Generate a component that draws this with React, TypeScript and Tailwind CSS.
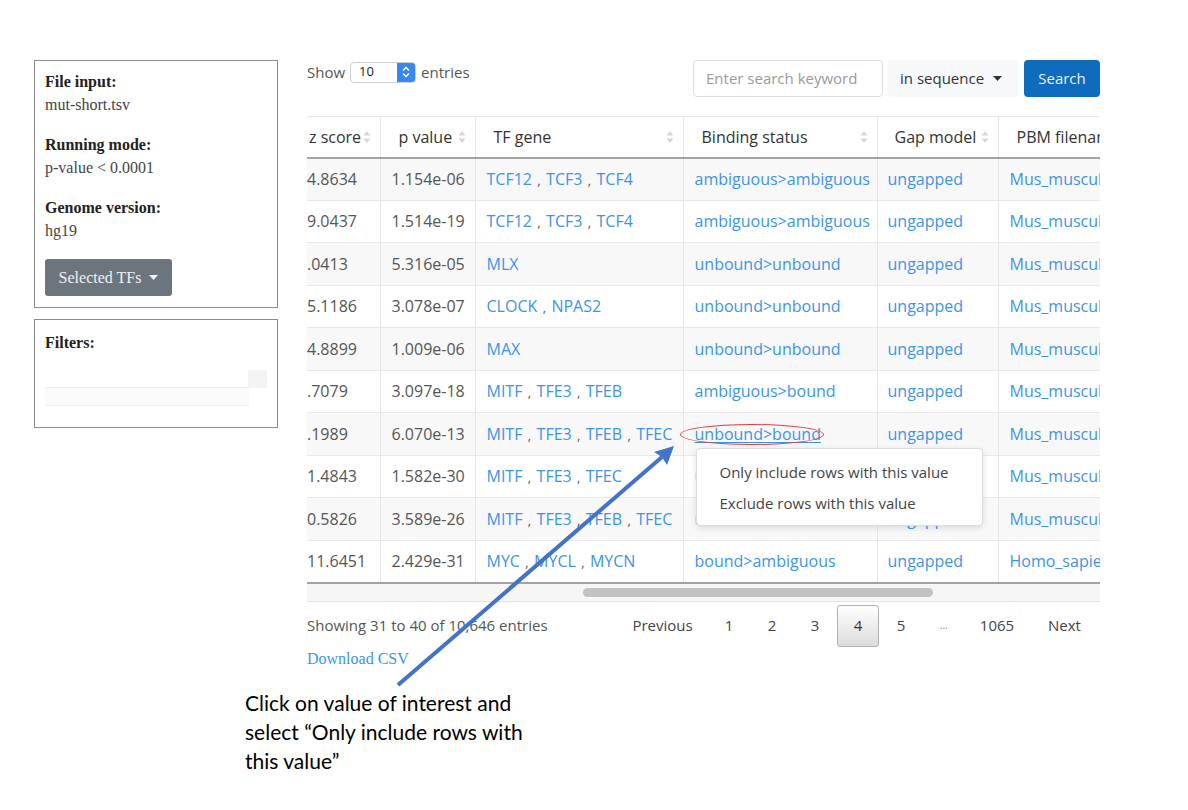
import { ReactNode } from "react";

type Row = {
    z: string;
    p: string;
    tf: string[];
    binding: string;
    gap: string;
    file: string;
    menu?: boolean;
};

const rows: Row[] = [
    { z: "4.8634", p: "1.154e-06", tf: ["TCF12", "TCF3", "TCF4"], binding: "ambiguous>ambiguous", gap: "ungapped", file: "Mus_musculus" },
    { z: "9.0437", p: "1.514e-19", tf: ["TCF12", "TCF3", "TCF4"], binding: "ambiguous>ambiguous", gap: "ungapped", file: "Mus_musculus" },
    { z: ".0413", p: "5.316e-05", tf: ["MLX"], binding: "unbound>unbound", gap: "ungapped", file: "Mus_musculus" },
    { z: "5.1186", p: "3.078e-07", tf: ["CLOCK", "NPAS2"], binding: "unbound>unbound", gap: "ungapped", file: "Mus_musculus" },
    { z: "4.8899", p: "1.009e-06", tf: ["MAX"], binding: "unbound>unbound", gap: "ungapped", file: "Mus_musculus" },
    { z: ".7079", p: "3.097e-18", tf: ["MITF", "TFE3", "TFEB"], binding: "ambiguous>bound", gap: "ungapped", file: "Mus_musculus" },
    { z: ".1989", p: "6.070e-13", tf: ["MITF", "TFE3", "TFEB", "TFEC"], binding: "unbound>bound", gap: "ungapped", file: "Mus_musculus", menu: true },
    { z: "1.4843", p: "1.582e-30", tf: ["MITF", "TFE3", "TFEC"], binding: "unbound>bound", gap: "ungapped", file: "Mus_musculus" },
    { z: "0.5826", p: "3.589e-26", tf: ["MITF", "TFE3", "TFEB", "TFEC"], binding: "unbound>bound", gap: "ungapped", file: "Mus_musculus" },
    { z: "11.6451", p: "2.429e-31", tf: ["MYC", "MYCL", "MYCN"], binding: "bound>ambiguous", gap: "ungapped", file: "Homo_sapiens" },
];

const SortIcon = () => (
    <svg width="8" height="14" viewBox="0 0 8 14" className="shrink-0">
        <path d="M4 1 L7.5 5.5 H0.5 Z" fill="#d6d6d6" />
        <path d="M4 13 L7.5 8.5 H0.5 Z" fill="#d6d6d6" />
    </svg>
);

const Info = ({ label, value }: { label: string; value: string }) => (
    <div className="mb-[17px]">
        <div className="font-bold text-[#222] leading-[23px]">{label}</div>
        <div className="text-[#444] leading-[23px]">{value}</div>
    </div>
);

const Sidebar = () => (
    <aside className="w-[244px] flex flex-col gap-[11px] font-['Liberation_Serif',serif] text-[16px]">
        <div className="border border-[#8c8c8c] h-[248px] px-[10px] pt-[9px]">
            <Info label="File input:" value="mut-short.tsv" />
            <Info label="Running mode:" value="p-value < 0.0001" />
            <Info label="Genome version:" value="hg19" />
            <button className="mt-[1px] h-[37px] w-[127px] rounded-[3px] bg-[#6c757d] text-[#eef0f2] flex items-center justify-center gap-[8px] text-[16px]">
                Selected TFs
                <svg width="9" height="5" viewBox="0 0 9 5"><path d="M0 0 H9 L4.5 5 Z" fill="#f3f3f3" /></svg>
            </button>
        </div>
        <div className="border border-[#8c8c8c] h-[109px] px-[10px] pt-[11px]">
            <div className="font-bold text-[#222] leading-[23px]">Filters:</div>
            <div className="mt-[16px] flex">
                <div className="w-[204px] h-[18px] border-b border-[#ececec]" />
                <div className="w-[19px] h-[18px] bg-[#f4f4f4]" />
            </div>
            <div className="w-[204px] h-[18px] bg-[#fafafa] border-b border-[#efefef]" />
        </div>
    </aside>
);

const Controls = () => (
    <div className="flex items-start justify-between h-[37px] text-[15px] text-[#555]">
        <div className="flex items-center gap-[5px] mt-[2px] h-[20px]">
            <span>Show</span>
            <div className="flex items-center w-[66px] h-[21px] border border-[#cfcfcf] rounded-[4px] overflow-hidden bg-white">
                <span className="flex-1 pl-[8px] text-[13px] text-[#222]">10</span>
                <span className="w-[18px] h-full bg-[#3a87f1] flex flex-col items-center justify-center">
                    <svg width="8" height="12" viewBox="0 0 8 12"><path d="M1 4.5 L4 1.5 L7 4.5 M1 7.5 L4 10.5 L7 7.5" stroke="white" strokeWidth="1.5" fill="none" /></svg>
                </span>
            </div>
            <span>entries</span>
        </div>
        <div className="flex items-center gap-[5px]">
            <div className="w-[190px] h-[37px] border border-[#dedede] rounded-[4px] flex items-center pl-[12px] text-[#9a9a9a]">
                Enter search keyword
            </div>
            <div className="w-[131px] h-[37px] rounded-[4px] bg-[#f7f8f9] flex items-center pl-[12px] gap-[9px] text-[#333]">
                in sequence
                <svg width="9" height="5" viewBox="0 0 9 5"><path d="M0 0 H9 L4.5 5 Z" fill="#333" /></svg>
            </div>
            <button className="w-[76px] h-[37px] rounded-[4px] bg-[#0e6bbd] text-[#e8f1fb]">Search</button>
        </div>
    </div>
);

const headers: { label: string; w: string; pl: string }[] = [
    { label: "z score", w: "w-[73px]", pl: "pl-[2px]" },
    { label: "p value", w: "w-[95px]", pl: "pl-[18px]" },
    { label: "TF gene", w: "w-[208px]", pl: "pl-[18px]" },
    { label: "Binding status", w: "w-[194px]", pl: "pl-[18px]" },
    { label: "Gap model", w: "w-[121px]", pl: "pl-[17px]" },
    { label: "PBM filename", w: "w-[160px]", pl: "pl-[18px]" },
];

const Link = ({ children, underline }: { children: ReactNode; underline?: boolean }) => (
    <span className={underline ? "text-[#3d93ec] underline underline-offset-2" : "text-[#3d93ec]"}>{children}</span>
);

const Table = () => (
    <div className="mt-[19px] w-[793px] overflow-hidden">
        <table className="table-fixed border-collapse w-[851px] text-[16px] text-[#555]">
            <thead>
                <tr className="h-[41px] border-t border-[#e6e8eb] border-b-2 border-b-[#a3a3a3]">
                    {headers.map((h, i) => (
                        <th key={h.label} className={`${h.w} ${h.pl} pr-[9px] font-normal text-[#333] text-left ${i < 5 ? "border-r border-[#e3e6ea]" : ""}`}>
                            <div className="flex items-center justify-between whitespace-nowrap">
                                <span>{h.label}</span>
                                {i < 5 && <SortIcon />}
                            </div>
                        </th>
                    ))}
                </tr>
            </thead>
            <tbody>
                {rows.map((r, i) => (
                    <tr key={i} className={`h-[42.5px] border-b border-[#e8e8e8] ${i === rows.length - 1 ? "border-b-2 border-b-[#a3a3a3]" : ""} ${i % 2 === 0 ? "bg-[#f8f8f8]" : "bg-white"}`}>
                        <td className="pl-0 pr-[8px] border-r border-[#e3e6ea] whitespace-nowrap">{r.z}</td>
                        <td className="px-[11px] border-r border-[#e3e6ea] whitespace-nowrap">{r.p}</td>
                        <td className="px-[11px] border-r border-[#e3e6ea] whitespace-nowrap">
                            {r.tf.map((g, j) => (
                                <span key={g}>
                                    {j > 0 && <span className="text-[#555] text-[13px] px-[2px]"> , </span>}
                                    <Link>{g}</Link>
                                </span>
                            ))}
                        </td>
                        <td className="relative px-[11px] border-r border-[#e3e6ea] whitespace-nowrap">
                            <Link underline={r.menu}>{r.binding}</Link>
                            {r.menu && (
                                <>
                                    <div className="absolute left-[-4px] top-[11px] w-[144px] h-[21px] border border-[#e0413a] rounded-[50%]" />
                                    <div className="absolute z-10 left-[12px] top-[35px] w-[287px] h-[78px] bg-white border border-[#dcdcdc] rounded-[4px] shadow-[0_2px_6px_rgba(0,0,0,0.12)] pt-[8px] pl-[23px] text-[15px] text-[#444]">
                                        <div className="h-[31px] flex items-center">Only include rows with this value</div>
                                        <div className="h-[31px] flex items-center">Exclude rows with this value</div>
                                    </div>
                                </>
                            )}
                        </td>
                        <td className="px-[10px] border-r border-[#e3e6ea] whitespace-nowrap"><Link>{r.gap}</Link></td>
                        <td className="px-[11px] whitespace-nowrap overflow-hidden"><Link>{r.file}</Link></td>
                    </tr>
                ))}
            </tbody>
        </table>
        <div className="h-[18px] bg-[#f6f6f6] border-b border-[#e4e4e4] flex items-center">
            <div className="ml-[276px] w-[350px] h-[9px] rounded-full bg-[#c2c2c2]" />
        </div>
    </div>
);

const pages = [
    { label: "Previous", w: "w-[89px]" },
    { label: "1", w: "w-[42px]" },
    { label: "2", w: "w-[42px]" },
    { label: "3", w: "w-[42px]" },
    { label: "4", w: "w-[42px]", active: true },
    { label: "5", w: "w-[42px]" },
    { label: "…", w: "w-[42px]", small: true },
    { label: "1065", w: "w-[62px]" },
    { label: "Next", w: "w-[71px]" },
];

const Footer = () => (
    <div className="text-[15px] text-[#555]">
        <div className="flex items-center justify-between h-[42px] mt-[3px]">
            <span>Showing 31 to 40 of 10,646 entries</span>
            <div className="flex gap-[1px]">
                {pages.map((p) => (
                    <div
                        key={p.label}
                        className={`${p.w} h-[42px] flex items-center justify-center ${p.active ? "border border-[#b0b0b0] rounded-[3px] bg-gradient-to-b from-white to-[#dcdcdc] text-[#333]" : "text-[#444]"} ${p.small ? "text-[10px] text-[#888]" : ""}`}
                    >
                        {p.label}
                    </div>
                ))}
            </div>
        </div>
        <div className="mt-[1px] font-['Liberation_Serif',serif] text-[16px] text-[#3d93ec] leading-[22px]">Download CSV</div>
    </div>
);

export default function App() {
    return (
        <div className="relative w-[1188px] h-[810px] bg-white overflow-hidden font-['Open_Sans',sans-serif]">
            <div className="flex pt-[60px] pl-[34px]">
                <Sidebar />
                <main className="ml-[29px] w-[793px]">
                    <Controls />
                    <Table />
                    <Footer />
                </main>
            </div>
            <p className="ml-[245px] mt-[18px] font-['Lato',sans-serif] text-[21px] leading-[29px] text-black">
                Click on value of interest and<br />
                select “Only include rows with<br />
                this value”
            </p>
            <svg className="absolute inset-0 pointer-events-none" width="1188" height="810">
                <line x1="398" y1="685" x2="662" y2="457" stroke="#4472c4" strokeWidth="4" />
                <path d="M674 446 L667 465 L662 457 L654 452 Z" fill="#4472c4" />
            </svg>
        </div>
    );
}
